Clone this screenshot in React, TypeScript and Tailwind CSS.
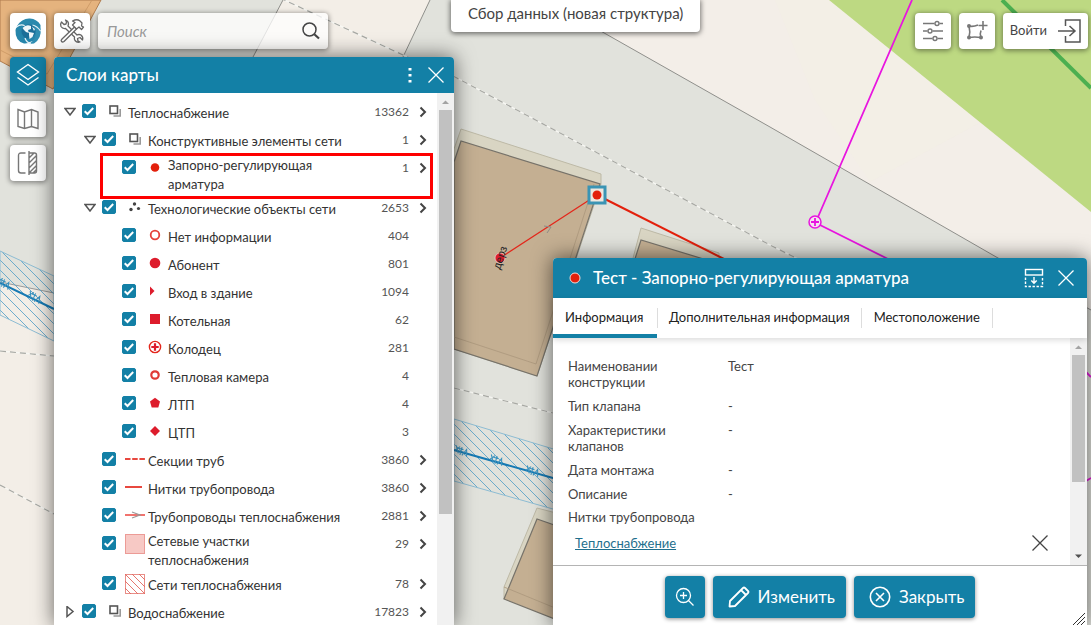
import type { ReactNode } from "react";

type Layer = {
  id: string;
  name: string;
  count: number;
  level: 0 | 1 | 2;
  icon: ReactNode;
  state?: "open" | "closed";
  arrow?: boolean;
  marked?: boolean;
};

const RED = "#dd1c2c";

function Marker({ children }: { children: ReactNode }) {
  return (
    <svg width="20" height="20" viewBox="0 0 20 20" fill="none" aria-hidden="true">
      {children}
    </svg>
  );
}

const groupIcon = (
  <Marker>
    <path d="M8.5 14H15.2V7" stroke="#999" strokeWidth="1.6" />
    <rect x="5" y="4" width="7.5" height="7.5" stroke="#555" strokeWidth="1.6" />
  </Marker>
);

const layers: Layer[] = [
  { id: "heat", name: "Теплоснабжение", count: 13362, level: 0, icon: groupIcon, state: "open", arrow: true },
  { id: "constr", name: "Конструктивные элементы сети", count: 1, level: 1, icon: groupIcon, state: "open", arrow: true },
  {
    id: "valve", name: "Запорно-регулирующая арматура", count: 1, level: 2, arrow: true, marked: true,
    icon: <Marker><circle cx="10" cy="9.5" r="4.3" fill="#e3200c" /></Marker>,
  },
  {
    id: "tech", name: "Технологические объекты сети", count: 2653, level: 1, state: "open", arrow: true,
    icon: (
      <Marker>
        <g fill="#444"><circle cx="9.5" cy="6" r="1.7" /><circle cx="6" cy="11.5" r="1.7" /><circle cx="13.5" cy="10.5" r="1.6" /></g>
      </Marker>
    ),
  },
  { id: "noinfo", name: "Нет информации", count: 404, level: 2, icon: <Marker><circle cx="10" cy="9" r="4.3" stroke="#e5413a" strokeWidth="1.8" /></Marker> },
  { id: "abonent", name: "Абонент", count: 801, level: 2, icon: <Marker><circle cx="10" cy="9" r="5.3" fill={RED} /></Marker> },
  { id: "entry", name: "Вход в здание", count: 1094, level: 2, icon: <Marker><path d="M5 4.5L9.5 9L5 13.5Z" fill={RED} /></Marker> },
  { id: "boiler", name: "Котельная", count: 62, level: 2, icon: <Marker><rect x="5" y="4" width="10" height="10" fill={RED} /></Marker> },
  {
    id: "well", name: "Колодец", count: 281, level: 2,
    icon: <Marker><circle cx="10" cy="9" r="5.6" stroke="#e3261a" strokeWidth="1.4" /><path d="M10 5.3V12.7M6.3 9H13.7" stroke={RED} strokeWidth="2.2" /></Marker>,
  },
  { id: "chamber", name: "Тепловая камера", count: 4, level: 2, icon: <Marker><circle cx="10" cy="9" r="3.7" stroke="#e03a35" strokeWidth="2.2" /></Marker> },
  { id: "ltp", name: "ЛТП", count: 4, level: 2, icon: <Marker><path d="M10 3.8L15 7.6L13.3 13.6H6.7L5 7.6Z" fill={RED} /></Marker> },
  { id: "ctp", name: "ЦТП", count: 3, level: 2, icon: <Marker><path d="M10 4L15 9L10 14L5 9Z" fill={RED} /></Marker> },
  { id: "sections", name: "Секции труб", count: 3860, level: 1, arrow: true, icon: <Marker><path d="M0 9H20" stroke="#e8483f" strokeWidth="2" strokeDasharray="5.5 1.7" /></Marker> },
  { id: "threads", name: "Нитки трубопровода", count: 3860, level: 1, arrow: true, icon: <Marker><path d="M0 9H17" stroke="#e8483f" strokeWidth="2" /></Marker> },
  {
    id: "pipes", name: "Трубопроводы теплоснабжения", count: 2881, level: 1, arrow: true,
    icon: <Marker><path d="M0 9H20" stroke="#f0645e" strokeWidth="1.8" /><path d="M7 6L15 9L7 12" stroke="#999" strokeWidth="1.2" /></Marker>,
  },
  { id: "areas", name: "Сетевые участки теплоснабжения", count: 29, level: 1, arrow: true, icon: <Marker><rect x=".5" y=".5" width="19" height="19" fill="#f7c9c5" stroke="#ec9b96" /></Marker> },
  {
    id: "nets", name: "Сети теплоснабжения", count: 78, level: 1, arrow: true,
    icon: (
      <Marker>
        <rect x=".5" y=".5" width="19" height="19" stroke="#e98e88" />
        <path d="M0 14L6 20M0 7L13 20M0 0L20 20M7 0L20 13M14 0L20 6" stroke="#e2685f" strokeWidth=".9" />
      </Marker>
    ),
  },
  { id: "water", name: "Водоснабжение", count: 17823, level: 0, icon: groupIcon, state: "closed", arrow: true },
];

const details = [
  ["Наименовании конструкции", "Тест"],
  ["Тип клапана", "-"],
  ["Характеристики клапанов", "-"],
  ["Дата монтажа", "-"],
  ["Описание", "-"],
];

const indents = ["pl-2", "pl-7", "pl-12"];

const mapButton = "flex size-9 shrink-0 items-center justify-center rounded-[4px] shadow-[0_1px_5px_1px_rgba(0,0,0,0.4)]";
const actionButton = "flex h-[42px] items-center rounded-[4px] bg-[#1380a6] text-[17px] text-white shadow-[0_1px_4px_rgba(0,0,0,0.45)]";

function Cross({ size }: { size: number }) {
  return (
    <svg width={size} height={size} viewBox="0 0 16 16" stroke="currentColor" strokeWidth="1.3" fill="none" aria-hidden="true">
      <path d="M.5 .5L15.5 15.5M15.5 .5L.5 15.5" />
    </svg>
  );
}

function ScrollArrow({ down }: { down?: boolean }) {
  return (
    <svg width="17" height="17" viewBox="0 0 17 17" className="shrink-0" aria-hidden="true">
      <path d={down ? "M5 6.5H12L8.5 10Z" : "M5 11H12L8.5 7.5Z"} fill={down ? "#505050" : "#a3a3a3"} />
    </svg>
  );
}

function WaterLabel({ x, y, angle }: { x: number; y: number; angle: number }) {
  return (
    <g transform={`translate(${x} ${y}) rotate(${angle})`} stroke="#3c93bf" strokeWidth="1.1" fill="none">
      <path d="M-6 -4L-2 3M-6 1L-2 -4M-3 -2H2M0 -4V4M2 4L5 -3L7 4" />
    </g>
  );
}

function MapCanvas() {
  return (
    <svg className="absolute inset-0 size-full" viewBox="0 0 1091 625" preserveAspectRatio="xMinYMin slice" fill="none" aria-hidden="true">
      <defs>
        <pattern id="hatch" width="10" height="10" patternUnits="userSpaceOnUse">
          <path d="M-1 -1L11 11M-1 9L1 11M9 -1L11 1" stroke="#5fa5c9" strokeWidth=".9" />
        </pattern>
      </defs>
      <rect width="1091" height="625" fill="#e1e2dc" />

      {/* ground areas */}
      <path d="M283 0H430L403 57H253Z" fill="#f3eee7" />
      <path d="M546 0H1091V310L998 258L770 127Z" fill="#f3eee8" />
      <path d="M775 0H837L985 120L870 182L815 100Z" fill="#f3efe4" opacity=".5" />
      <path d="M829 0H1091V212Z" fill="#bdd982" />
      <path d="M1002 0L1091 88" stroke="#4caf50" strokeWidth="4" />
      <path d="M0 282L54 293V625H0Z" fill="#f3eee7" />
      <path d="M430 0L403 57M283 0L253 57M546 0L770 127L998 258L1091 310" stroke="#8f8f8b" strokeWidth="1" />
      <path d="M0 282L54 293" stroke="#999" strokeWidth="1" />
      <g stroke="#f7f7f3" strokeWidth="1.4">
        <path d="M280 -2L403 55L455 77L770 245L800 260M454 388L553 413M0 351L54 356M0 485L54 514" />
      </g>
      <g stroke="#a7a8a3" strokeWidth="1.2" strokeDasharray="6 4">
        <path d="M280 -2L403 55L455 77L770 245L800 260M454 388L553 413M0 351L54 356M0 485L54 514" />
      </g>

      {/* buildings */}
      <path d="M0 0H101L53 89L0 61Z" fill="#e5b37e" stroke="#b07d4f" />
      <path d="M0 50L47 74L92 0" stroke="#c99763" strokeWidth=".8" />
      <path d="M454 149L461 129L601 174V184L537 376L454 349Z" fill="#d9d5c3" stroke="#bdb9a6" />
      <path d="M454 162L461 141L600 184L537 376L454 349Z" fill="#c4af92" stroke="#77736a" strokeWidth="1.2" />
      <path d="M454 337L536 364L594 184" stroke="#ab977c" strokeWidth=".8" />
      <path d="M632 262L641 228L719 253V262Z" fill="#d9d5c3" stroke="#bdb9a6" />
      <path d="M634 262L641 240L720 264Z" fill="#c4af92" stroke="#77736a" strokeWidth="1.2" />
      <path d="M504 599V587L537 508L560 514V530Z" fill="#d9d5c3" stroke="#bdb9a6" />
      <path d="M560 527L537 519L504 599L560 621Z" fill="#c4af92" stroke="#77736a" strokeWidth="1.2" />
      <path d="M504 587L560 610" stroke="#ab977c" strokeWidth=".8" />

      {/* water network */}
      <path d="M0 251L54 276V341L0 315Z" fill="url(#hatch)" stroke="#8dbcd3" />
      <path d="M454 419L560 451V511L454 481Z" fill="url(#hatch)" stroke="#8dbcd3" />
      <path d="M0 283L54 309M454 450L560 480" stroke="#1679b3" strokeWidth="2" />
      <WaterLabel x={3} y={283} angle={25} />
      <WaterLabel x={34} y={297} angle={25} />
      <WaterLabel x={461} y={451} angle={16} />
      <WaterLabel x={496} y={460} angle={16} />
      <WaterLabel x={532} y={471} angle={16} />

      {/* heat network */}
      <path d="M597 195L500 258" stroke="#e3261a" strokeWidth="1.2" />
      <path d="M597 195L726 260" stroke="#e3200c" strokeWidth="2" />
      <path d="M544 226L551 227L547 233" stroke="#8d8a86" />
      <circle cx="500" cy="258" r="5" fill={RED} stroke="#eec9c9" strokeWidth=".8" />
      <text x="500" y="270" transform="rotate(-72 500 270)" fontSize="11" fill="#222" className="font-['Liberation_Sans']">дерз</text>
      <rect x="589" y="187" width="16" height="16" fill="#eee8e0" stroke="#3a94b4" strokeWidth="3" />
      <circle cx="597" cy="195" r="4.5" fill="#e3200c" />

      <g stroke="#e815df">
        <path d="M912 0L818 217M820 225L890 260M1086 372L1091 377M1086 481L1091 478" strokeWidth="1.8" />
        <circle cx="815" cy="222" r="6" fill="#f5e3f0" strokeWidth="1.5" />
        <path d="M815 218V226M811 222H819" strokeWidth="1.8" />
      </g>
    </svg>
  );
}

function LayerRow({ layer }: { layer: Layer }) {
  return (
    <li className={`relative flex min-h-7 pr-[10px] ${indents[layer.level]}`}>
      {layer.state ? (
        <button className="flex h-7 w-4 shrink-0 items-center justify-center" aria-label="Развернуть">
          <svg width="12" height="12" viewBox="0 0 12 12" fill="none" stroke="#555" strokeWidth="1.5">
            <path d={layer.state === "open" ? "M1 2.5H11L6 9Z" : "M3 .5V10.5L9 5.5Z"} />
          </svg>
        </button>
      ) : (
        <span className="w-4 shrink-0" />
      )}
      <span className="ml-1 grid h-[26px] shrink-0 place-items-center">
        <input
          id={layer.id}
          type="checkbox"
          defaultChecked
          className="peer col-start-1 row-start-1 size-3.5 appearance-none rounded-[2px] border border-[#1380a6] checked:bg-[#1380a6]"
        />
        <svg className="pointer-events-none col-start-1 row-start-1 opacity-0 peer-checked:opacity-100" width="14" height="14" viewBox="0 0 14 14" fill="none">
          <path d="M2.7 7.3L5.5 10L11.2 4" stroke="white" strokeWidth="2" />
        </svg>
      </span>
      <span className="ml-[9px] flex h-7 shrink-0 items-center">{layer.icon}</span>
      <label htmlFor={layer.id} className="ml-[3px] max-w-[203px] self-center pt-0.5 leading-[19px]">
        {layer.name}
      </label>
      <span className="ml-auto flex h-7 items-center text-[12px] text-[#555]">{layer.count}</span>
      <span className="flex h-7 w-[18px] items-center justify-end">
        {layer.arrow && (
          <button aria-label="Объекты слоя">
            <svg width="8" height="12" viewBox="0 0 8 12" fill="none" stroke="#444" strokeWidth="2">
              <path d="M1.5 1.5L6 6L1.5 10.5" />
            </svg>
          </button>
        )}
      </span>
      {layer.marked && <span className="pointer-events-none absolute -top-px right-1 -bottom-[5px] left-[46px] z-10 border-3 border-[#fe0000]" />}
    </li>
  );
}

function LayersPanel() {
  return (
    <section className="flex w-[400px] flex-col overflow-hidden rounded-t-[4px] bg-white shadow-[0_0_20px_1px_rgba(0,0,0,0.55)]">
      <header className="flex h-9 shrink-0 items-center bg-[#1380a6] pr-[10px] pl-3 text-white">
        <h2 className="flex-1 text-[17px] font-medium">Слои карты</h2>
        <button className="mr-3 px-1" aria-label="Меню">
          <svg width="4" height="15" viewBox="0 0 4 15" fill="currentColor"><path d="M.5 0H3.5V2.5H.5ZM.5 6H3.5V8.5H.5ZM.5 12H3.5V14.5H.5Z" /></svg>
        </button>
        <button aria-label="Закрыть"><Cross size={16} /></button>
      </header>
      <div className="flex min-h-0 flex-1">
        <ul className="min-w-0 flex-1 overflow-hidden pt-[5px] text-[13px] text-[#333]">
          {layers.map((layer) => (
            <LayerRow key={layer.id} layer={layer} />
          ))}
        </ul>
        <div className="flex w-[17px] flex-col items-center bg-[#f1f1f1]">
          <ScrollArrow />
          <div className="h-[76%] w-[13px] bg-[#c1c1c1]" />
        </div>
      </div>
    </section>
  );
}

function ObjectCard() {
  return (
    <section className="absolute right-1 bottom-0 w-[534px] rounded-t-[4px] bg-white shadow-[0_0_20px_1px_rgba(0,0,0,0.55)]">
      <header className="flex h-10 items-center rounded-t-[4px] bg-[#1380a6] pr-[13px] pl-4 text-white">
        <svg width="12" height="12" viewBox="0 0 12 12" aria-hidden="true"><circle cx="6" cy="6" r="5" fill="#e3200c" stroke="#f0dcd8" /></svg>
        <h2 className="ml-3 flex-1 text-[17px] font-medium">Тест - Запорно-регулирующая арматура</h2>
        <button className="mr-3.5" aria-label="Свернуть">
          <svg width="20" height="20" viewBox="0 0 20 20" fill="none" stroke="currentColor" strokeWidth="1.4">
            <rect x="1.5" y="1.5" width="17" height="5.5" />
            <path d="M1.5 9.5V18.5H18.5V8.5" strokeDasharray="2.4 1.6" />
            <path d="M10 9V15M7.3 12.5L10 15.2L12.7 12.5" />
          </svg>
        </button>
        <button aria-label="Закрыть карточку"><Cross size={16} /></button>
      </header>
      <nav className="relative z-10 flex h-10 items-center text-[13px] text-[#222] shadow-[0_2px_6px_rgba(0,0,0,0.15)]" role="tablist">
        <button role="tab" aria-selected="true" className="flex h-full w-26 items-center border-b-4 border-[#1380a6] pt-1 pl-3">Информация</button>
        <button role="tab" aria-selected="false" className="border-x border-[#ddd] px-[11px]">Дополнительная информация</button>
        <button role="tab" aria-selected="false" className="border-r border-[#ddd] px-3">Местоположение</button>
      </nav>
      <div className="flex border-b border-[#b4b4b4]">
        <div className="flex-1 pt-5 pr-[22px] pb-[14px] pl-[15px] text-[13px] leading-4 text-[#444]">
          <dl className="grid grid-cols-[120px_1fr] gap-x-10 gap-y-2">
            {details.map(([label, value]) => (
              <div key={label} className="contents">
                <dt>{label}</dt>
                <dd>{value}</dd>
              </div>
            ))}
          </dl>
          <p className="mt-[7px]">Нитки трубопровода</p>
          <div className="mt-[10px] flex items-center justify-between pl-[7px]">
            <a href="#heat" className="text-[#1f6f8d] underline">Теплоснабжение</a>
            <button className="text-[#444]" aria-label="Удалить связь"><Cross size={16} /></button>
          </div>
        </div>
        <div className="flex w-[17px] flex-col bg-[#f1f1f1]">
          <ScrollArrow />
          <div className="flex flex-1 flex-col px-0.5">
            <div className="h-[66%] bg-[#c1c1c1]" />
          </div>
          <ScrollArrow down />
        </div>
      </div>
      <footer className="relative flex justify-center gap-2 pt-[10px] pb-[7px]">
        <button className={`${actionButton} w-10 justify-center`} aria-label="Приблизить">
          <svg width="20" height="20" viewBox="0 0 20 20" fill="none" stroke="currentColor" strokeWidth="1.3">
            <circle cx="8.5" cy="8.5" r="7" />
            <path d="M13.5 13.5L18.5 18.5M8.5 5V12M5 8.5H12" />
          </svg>
        </button>
        <button className={`${actionButton} gap-2 pr-[11px] pl-[15px]`}>
          <svg width="22" height="22" viewBox="0 0 22 22" fill="none" stroke="currentColor" strokeWidth="1.8" strokeLinejoin="round">
            <path d="M2 15L15 2Q16 1 17 2L20 5Q21 6 20 7L7 20L1.5 20.5ZM13 4L18 9" />
          </svg>
          Изменить
        </button>
        <button className={`${actionButton} gap-2 pr-[11px] pl-[15px]`}>
          <svg width="22" height="22" viewBox="0 0 22 22" fill="none" stroke="currentColor" strokeWidth="1.6">
            <circle cx="11" cy="11" r="9.7" />
            <path d="M7 7L15 15M15 7L7 15" />
          </svg>
          Закрыть
        </button>
        <svg className="absolute right-0.5 bottom-0" width="12" height="12" viewBox="0 0 12 12" stroke="#333" aria-hidden="true">
          <path d="M0 12L12 0M4 12L12 4M8 12L12 8" />
        </svg>
      </footer>
    </section>
  );
}

export default function App() {
  return (
    <div className="relative flex h-screen flex-col overflow-hidden font-['Lato',sans-serif] text-[#444]">
      <MapCanvas />

      <div className="relative flex items-start pr-[3px] pl-[10px]">
        <div className="flex gap-2 pt-[13px]">
          <button className={`${mapButton} bg-white`} aria-label="Главная">
            <svg width="28" height="28" viewBox="0 0 28 28" fill="none">
              <circle cx="14" cy="14" r="11" fill="#2484ab" />
              <path d="M3 9Q8 1 16 1.5Q23 2 26.5 8V13Q22 6 15 7Q8 7.5 7 14Q3 13 3 9Z" fill="#2a89ad" />
              <path d="M26.5 12Q28 21 20 26.5L15 27Q23 22 21.5 14Q21 11 19 9Q25 8 26.5 12Z" fill="#2f8db1" />
              <path d="M1.5 13Q1 24 10 26.5Q14 27 17 24Q9 24 7 16Q6 12 7.5 9Q2 9 1.5 13Z" fill="#2685aa" />
              <path d="M2.5 10Q7 6.5 11 9M26.5 14Q23 9 18.5 8M17 27Q12 25 11 21" stroke="#e4f1f6" strokeWidth="1.2" />
              <circle cx="14.5" cy="14.5" r="7" fill="#1b6e98" />
              <path d="M8.5 11Q12 7 17 9L17 12L14 13L15 16L12 15L10 13ZM15 15L20 16L18.5 20L15.5 22L15 18ZM18 9.5L21 12L20 14Z" fill="#eef6f9" />
            </svg>
          </button>
          <button className={`${mapButton} bg-white text-[#666]`} aria-label="Инструменты">
            <svg width="26" height="26" viewBox="0 0 26 26" fill="none" stroke="currentColor" strokeWidth="1.3" strokeLinejoin="round">
              <path d="M6.5 2Q9.5 3 9.5 6L9 8L18 17Q20 16 22 17Q24.5 19 23.5 22L21 19.5L18.5 20.5L19 23L21 24Q18 25 16 22.5Q15 21 15.5 19L6.5 10.5Q3.5 11 2 8.5Q1 6 2.5 4L5 6.5L7 6L7.5 4Z" />
              <path d="M3 21L15.5 9L17.5 11L5 23.5Q3.5 24.5 2.5 23.5Q1.5 22.5 3 21Z" fill="white" />
              <path d="M13.5 7L16 4.5L13.5 3Q18 .5 21 3L23 5L22.5 8L24.5 9L22.5 11.5L20 9L17.5 11L15.5 9Z" fill="white" />
            </svg>
          </button>
          <form className="flex h-9 w-[230px] items-center rounded-[4px] bg-white/75 pr-2 pl-[9px] shadow-[0_1px_5px_1px_rgba(0,0,0,0.4)]">
            <input type="search" aria-label="Поиск" placeholder="Поиск" className="min-w-0 flex-1 text-[15px] italic outline-none placeholder:text-[#999]" />
            <button type="button" aria-label="Найти">
              <svg width="18" height="18" viewBox="0 0 18 18" fill="none" stroke="#444" strokeWidth="1.5">
                <circle cx="7.5" cy="7.5" r="6.5" />
                <path d="M12.3 12.3L17 16.5" strokeWidth="2.2" />
              </svg>
            </button>
          </form>
        </div>
        <h1 className="ml-[123px] h-8 rounded-b-[4px] bg-white px-[17px] text-[15px] leading-[26px] shadow-[0_1px_5px_1px_rgba(0,0,0,0.5)]">Сбор данных (новая структура)</h1>
        <div className="ml-auto flex gap-2 pt-[13px]">
          <button className={`${mapButton} bg-white`} aria-label="Настройки">
            <svg width="20" height="22" viewBox="0 0 20 22" fill="none" stroke="#777" strokeWidth="1.4">
              <path d="M0 3.5H11.5M16.5 3.5H20M0 11H4.5M9.5 11H20M0 18.5H9.5M14.5 18.5H20" />
              <circle cx="14" cy="3.5" r="2" /><circle cx="7" cy="11" r="2" /><circle cx="12" cy="18.5" r="2" />
            </svg>
          </button>
          <button className={`${mapButton} bg-white`} aria-label="Выделить область">
            <svg width="22" height="20" viewBox="0 0 22 20" fill="none" stroke="#777" strokeWidth="1.6">
              <path d="M3 5Q7 6 12 4M3 5Q4.5 10.5 3 16.5M3 16.5Q8.5 15.5 15 16.5M15 16.5Q13.5 13 15 9.5" />
              <path d="M17 0V9M12.5 4.5H21.5" />
              <g fill="#777" stroke="none"><circle cx="3" cy="5" r="2" /><circle cx="3" cy="16.5" r="2" /><circle cx="15" cy="16.5" r="2" /></g>
            </svg>
          </button>
          <button className="flex h-9 items-center gap-[11px] rounded-[4px] bg-white px-[7px] text-[13px] shadow-[0_1px_5px_1px_rgba(0,0,0,0.4)]">
            Войти
            <svg width="23" height="24" viewBox="0 0 23 24" fill="none" stroke="#555" strokeWidth="1.5">
              <path d="M7.5 7V1H22V23H7.5V17M0 12H17M11.5 7L17 12L11.5 17" />
            </svg>
          </button>
        </div>
      </div>

      <div className="relative mt-2 flex min-h-0 flex-1 gap-2 pl-[10px]">
        <nav className="flex flex-col gap-2">
          <button className={`${mapButton} bg-[#1380a6]`} aria-label="Слои">
            <svg width="24" height="24" viewBox="0 0 24 24" fill="none" stroke="white" strokeWidth="1.4">
              <path d="M12 1.5L22.5 9L12 16.5L1.5 9ZM1.5 14.5L12 22L22.5 14.5" />
            </svg>
          </button>
          <button className={`${mapButton} bg-white`} aria-label="Карта">
            <svg width="22" height="22" viewBox="0 0 22 22" fill="none" stroke="#777" strokeWidth="1.4">
              <path d="M1 1.5L7.5 4L14.5 1.5L21 4V20.5L14.5 18.5L7.5 20.5L1 18.5ZM7.5 4V20.5M14.5 1.5V18.5" />
            </svg>
          </button>
          <button className={`${mapButton} bg-white`} aria-label="Сравнение">
            <svg width="22" height="24" viewBox="0 0 22 24" fill="none" stroke="#777" strokeWidth="1.4">
              <path d="M8.5 2H4Q1.5 2 1.5 4.5V19.5Q1.5 22 4 22H8.5M12 0V24M12 2H17.5Q19.5 2 19.5 4V20Q19.5 22 17.5 22H12M12 7L17 2M12 12L19.5 4.5M12 17L19.5 9.5M12 22L19.5 14.5M16 22L19.5 18.5" />
            </svg>
          </button>
        </nav>
        <LayersPanel />
      </div>

      <ObjectCard />
    </div>
  );
}
